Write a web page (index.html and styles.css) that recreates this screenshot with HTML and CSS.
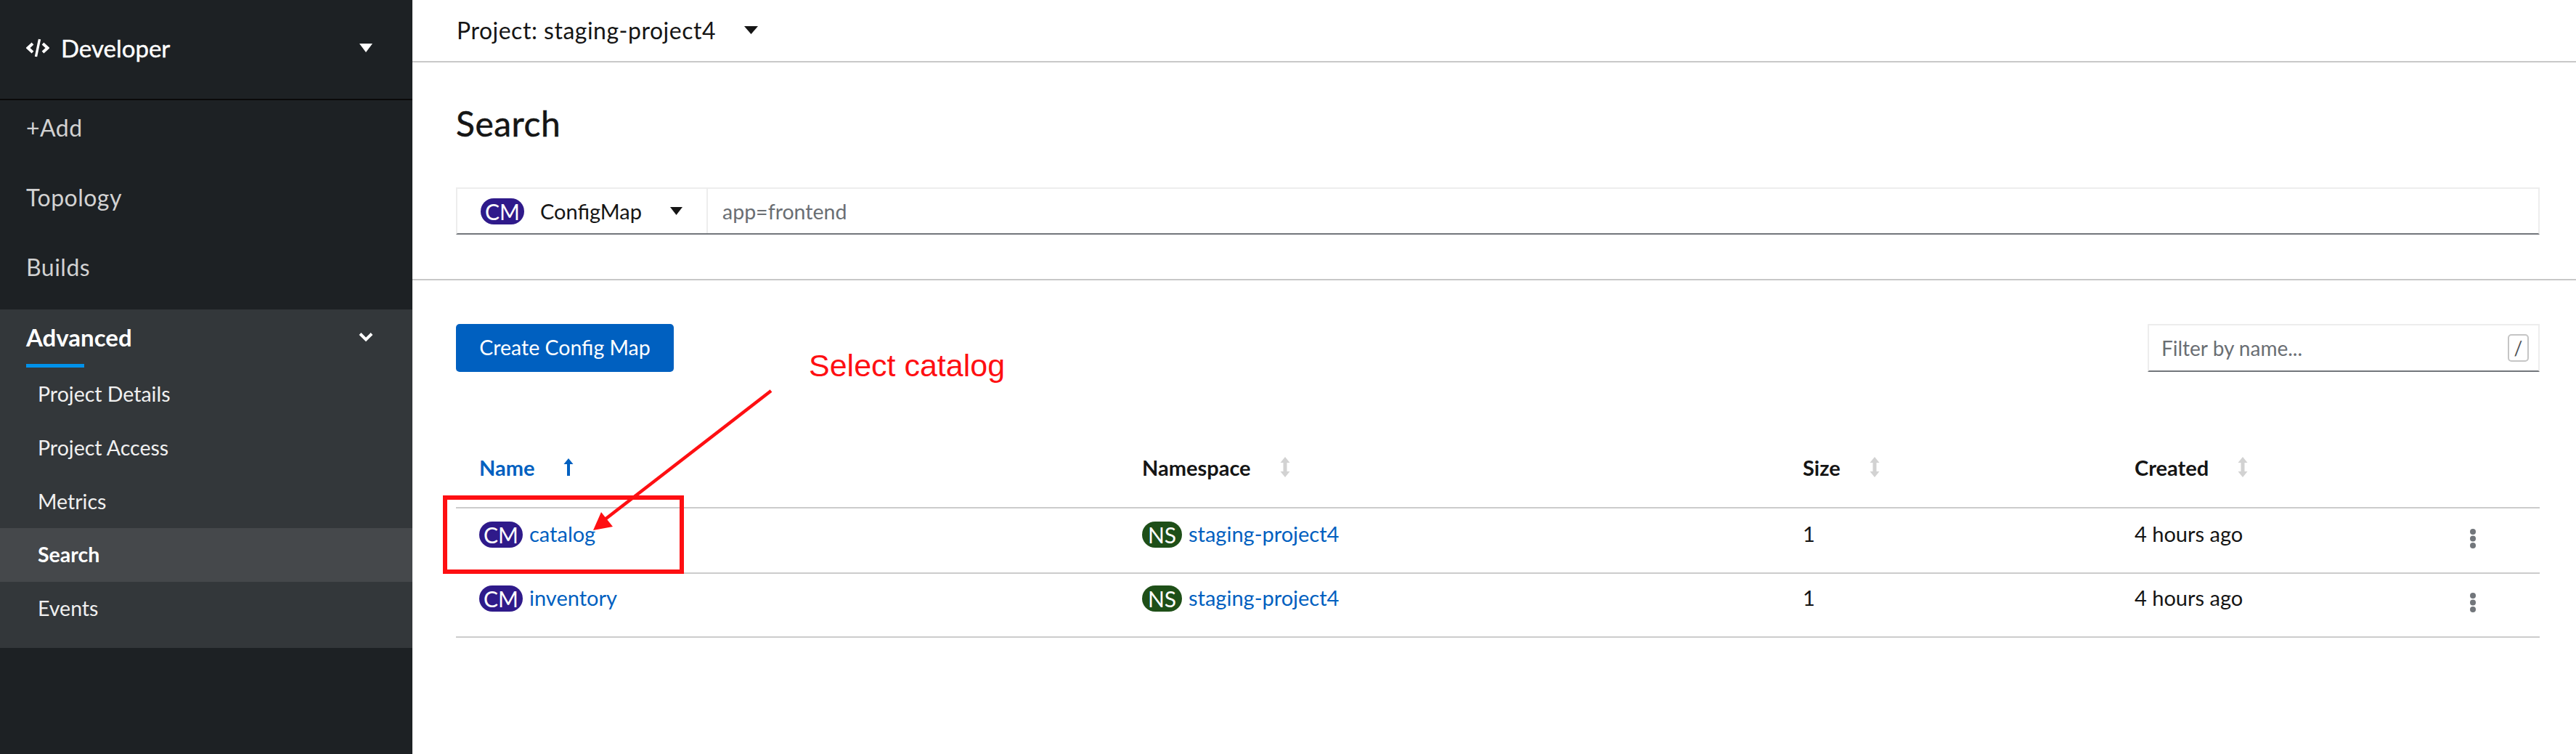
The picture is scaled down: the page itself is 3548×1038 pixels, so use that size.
FILE: index.html
```html
<!DOCTYPE html>
<html lang="en">
<head>
  <meta charset="UTF-8">
  <title>Search</title>
  <link rel="stylesheet" href="styles.css">
</head>
<body>
<div class="page">
  <aside class="sidebar">
    <div class="perspective">
      <svg class="code-icon" width="32" height="26" viewBox="0 0 32 26"><path d="M9 7 L2.5 13 L9 19 M23 7 L29.5 13 L23 19" fill="none" stroke="#fff" stroke-width="4"/><path d="M18.5 1 L13.5 25" fill="none" stroke="#fff" stroke-width="3.4"/></svg>
      <span class="perspective-name">Developer</span>
      <svg class="caret" width="18" height="12" viewBox="0 0 18 12"><path d="M0 0 H18 L9 12 Z" fill="#fff"/></svg>
    </div>
    <nav class="nav">
      <a class="nav-item">+Add</a>
      <a class="nav-item">Topology</a>
      <a class="nav-item">Builds</a>
      <div class="nav-group">
        <div class="nav-group-title">
          <span>Advanced</span>
          <svg width="20" height="14" viewBox="0 0 20 14"><path d="M2 2.5 L10 10.5 L18 2.5" fill="none" stroke="#fff" stroke-width="4"/></svg>
        </div>
        <div class="nav-group-bar"></div>
        <a class="sub-item">Project Details</a>
        <a class="sub-item">Project Access</a>
        <a class="sub-item">Metrics</a>
        <a class="sub-item active">Search</a>
        <a class="sub-item">Events</a>
      </div>
    </nav>
  </aside>

  <main class="main">
    <div class="project-bar">
      <span>Project: staging-project4</span>
      <svg width="19" height="11" viewBox="0 0 19 11"><path d="M0 0 H19 L9.5 11 Z" fill="#151515"/></svg>
    </div>

    <section class="search-head">
      <h1>Search</h1>
      <div class="search-box">
        <div class="type-select">
          <span class="badge cm">CM</span>
          <span class="type-name">ConfigMap</span>
          <svg width="17" height="11" viewBox="0 0 17 11"><path d="M0 0 H17 L8.5 11 Z" fill="#151515"/></svg>
        </div>
        <div class="label-input">app=frontend</div>
      </div>
    </section>

    <section class="content">
      <div class="toolbar">
        <button class="create-btn">Create Config Map</button>
        <div class="filter">
          <span>Filter by name...</span>
          <kbd class="slash">/</kbd>
        </div>
      </div>

      <div class="row head">
        <div class="cell th sorted">Name
          <svg class="sort" width="14" height="24" viewBox="0 0 14 24"><path d="M7 0 L13.5 8 H9 V24 H5 V8 H0.5 Z" fill="#0060c0"/></svg>
        </div>
        <div class="cell th">Namespace
          <svg class="sort" width="14" height="28" viewBox="0 0 14 28"><path d="M7 0 L13.5 8 H9.5 V20 H13.5 L7 28 L0.5 20 H4.5 V8 H0.5 Z" fill="#d2d2d2"/></svg>
        </div>
        <div class="cell th">Size
          <svg class="sort" width="14" height="28" viewBox="0 0 14 28"><path d="M7 0 L13.5 8 H9.5 V20 H13.5 L7 28 L0.5 20 H4.5 V8 H0.5 Z" fill="#d2d2d2"/></svg>
        </div>
        <div class="cell th">Created
          <svg class="sort" width="14" height="28" viewBox="0 0 14 28"><path d="M7 0 L13.5 8 H9.5 V20 H13.5 L7 28 L0.5 20 H4.5 V8 H0.5 Z" fill="#d2d2d2"/></svg>
        </div>
        <div class="cell"></div>
      </div>

      <div class="row body-row">
        <div class="cell"><span class="badge cm">CM</span><a class="link">catalog</a></div>
        <div class="cell"><span class="badge ns">NS</span><a class="link">staging-project4</a></div>
        <div class="cell plain">1</div>
        <div class="cell plain">4 hours ago</div>
        <div class="cell kebab"><svg width="8" height="27" viewBox="0 0 8 27"><circle cx="4" cy="4" r="4"/><circle cx="4" cy="13.5" r="4"/><circle cx="4" cy="23" r="4"/></svg></div>
      </div>
      <div class="row body-row second">
        <div class="cell"><span class="badge cm">CM</span><a class="link">inventory</a></div>
        <div class="cell"><span class="badge ns">NS</span><a class="link">staging-project4</a></div>
        <div class="cell plain">1</div>
        <div class="cell plain">4 hours ago</div>
        <div class="cell kebab"><svg width="8" height="27" viewBox="0 0 8 27"><circle cx="4" cy="4" r="4"/><circle cx="4" cy="13.5" r="4"/><circle cx="4" cy="23" r="4"/></svg></div>
      </div>
    </section>
  </main>

  <!-- red annotation drawn over the screenshot -->
  <svg class="annotation" width="3548" height="1038" viewBox="0 0 3548 1038">
    <rect x="613" y="685" width="326" height="102" fill="none" stroke="#fe0f12" stroke-width="6"/>
    <line x1="1062" y1="538" x2="832" y2="716" stroke="#fe0f12" stroke-width="4.5"/>
    <path d="M817 730 L828 705 L844 725 Z" fill="#fe0f12"/>
  </svg>
  <div class="select-note">Select catalog</div>
</div>
</body>
</html>
```

FILE: styles.css
```css
* {
  box-sizing: border-box;
}

body {
  margin: 0;
  font-family: "Lato", "Open Sans", sans-serif;
  background: #fff;
  color: #151515;
}

.page {
  position: relative;
  display: flex;
  width: 3548px;
  height: 1038px;
  overflow: hidden;
}

/* sidebar */
.sidebar {
  width: 568px;
  flex: none;
  background: #1d2124;
  color: #fff;
}

.perspective {
  display: flex;
  align-items: center;
  height: 138px;
  padding: 0 55px 4px 36px;
  border-bottom: 2px solid #0a0a0a;
}

.code-icon {
  margin-right: 16px;
}

.perspective-name {
  flex: 1;
  font-size: 33px;
  -webkit-text-stroke: 0.4px #fff;
}

.nav-item {
  display: flex;
  align-items: center;
  height: 78px;
  margin-bottom: 18px;
  padding: 0 0 3px 36px;
  font-size: 32px;
  letter-spacing: 0.5px;
  color: #d2d2d2;
}

.nav-group {
  height: 466px;
  background: #33373a;
}

.nav-group-title {
  display: flex;
  align-items: center;
  justify-content: space-between;
  height: 75px;
  padding: 1px 54px 0 36px;
  font-size: 33px;
  font-weight: 700;
}

.nav-group-bar {
  width: 80px;
  height: 5px;
  margin-left: 36px;
  background: #0091ea;
}

.sub-item {
  display: flex;
  align-items: center;
  height: 73.7px;
  padding: 0 0 1px 52px;
  font-size: 28.5px;
  color: #f0f0f0;
}

.sub-item.active {
  background: #45484b;
  font-weight: 700;
  color: #fff;
}

/* main column */
.main {
  flex: 1;
  min-width: 0;
}

.project-bar {
  display: flex;
  align-items: center;
  gap: 39px;
  height: 86px;
  padding: 0 0 2px 61px;
  border-bottom: 2px solid #c8c8c8;
  font-size: 32px;
  letter-spacing: 0.5px;
}

.search-head {
  height: 300px;
  padding: 0 50px 0 60px;
  border-bottom: 2px solid #c8c8c8;
}

h1 {
  margin: 0;
  height: 172px;
  padding-top: 54px;
  font-size: 48px;
  letter-spacing: 0.5px;
  line-height: 60px;
  font-weight: 400;
  -webkit-text-stroke: 0.5px #151515;
}

.search-box {
  display: flex;
  height: 65px;
  border: 2px solid #ededed;
  border-bottom-color: #72767b;
}

.type-select {
  display: flex;
  align-items: center;
  width: 345px;
  padding-left: 32px;
  border-right: 2px solid #ededed;
}

.type-name {
  margin: 0 39px 0 22px;
  font-size: 29px;
}

.label-input {
  display: flex;
  align-items: center;
  padding-left: 20px;
  font-size: 28.5px;
  color: #6a6e73;
}

.badge {
  display: inline-flex;
  align-items: center;
  justify-content: center;
  flex: none;
  width: 60px;
  height: 36px;
  border-radius: 18px;
  font-size: 30px;
  color: #fff;
}

.badge.cm {
  background: #2f1a8a;
}

.badge.ns {
  width: 55px;
  background: #1e4f18;
}

.content {
  padding: 60px 50px 0 60px;
}

.toolbar {
  display: flex;
  justify-content: space-between;
  height: 66px;
}

.create-btn {
  width: 300px;
  height: 66px;
  padding: 0 0 2px;
  border: none;
  border-radius: 5px;
  background: #0060c0;
  color: #fff;
  font-family: inherit;
  font-size: 28.5px;
}

.filter {
  display: flex;
  align-items: center;
  justify-content: space-between;
  width: 540px;
  padding: 0 13px 0 17px;
  border: 2px solid #ededed;
  border-bottom-color: #72767b;
  font-size: 28px;
  color: #6a6e73;
}

.slash {
  display: flex;
  align-items: center;
  justify-content: center;
  width: 29px;
  height: 38px;
  border: 2px solid #c5c5c5;
  border-radius: 5px;
  font-family: inherit;
  font-size: 26px;
  color: #4f5255;
}

.row {
  display: grid;
  grid-template-columns: 913px 910px 457px 462px 1fr;
  border-bottom: 2px solid #cccccc;
}

.row .cell {
  padding-left: 32px;
  font-size: 29px;
}

.row.head {
  height: 188px;
  padding-top: 114px;
}

.row .th {
  display: flex;
  align-items: center;
  height: 34px;
  font-weight: 700;
  font-size: 29px;
}

.th.sorted {
  color: #0060c0;
}

.sort {
  margin-left: 40px;
}

.body-row {
  height: 90px;
  padding-top: 18px;
}

.body-row.second {
  height: 88px;
  padding-top: 16px;
}

.body-row .cell {
  display: flex;
  align-items: center;
  height: 36px;
}

.body-row .plain {
  padding-bottom: 4px;
}

.link {
  margin: 0 0 4px 9px;
  color: #0060c0;
}

.row .kebab {
  padding-top: 11px;
}

.kebab svg {
  fill: #72767b;
}

/* annotation */
.annotation {
  position: absolute;
  left: 0;
  top: 0;
  pointer-events: none;
}

.select-note {
  position: absolute;
  left: 1114px;
  top: 478px;
  font-family: "Liberation Sans", Arial, sans-serif;
  font-size: 43px;
  line-height: 50px;
  color: #fe0f12;
}
```
